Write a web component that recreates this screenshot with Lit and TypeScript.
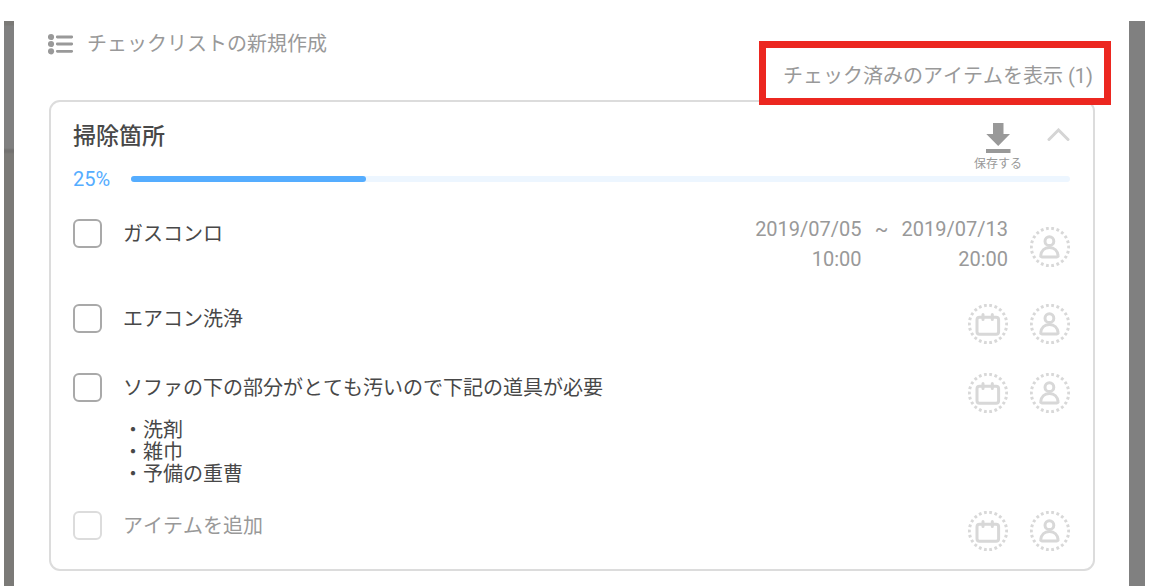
import { LitElement, html, css, svg, nothing } from "lit";
import { customElement, property, state } from "lit/decorators.js";

interface Stamp {
  date: string;
  time: string;
}

interface Item {
  id: string;
  title: string;
  notes?: string[];
  from?: Stamp;
  to?: Stamp;
}

const ITEMS: Item[] = [
  {
    id: "stove",
    title: "ガスコンロ",
    from: { date: "2019/07/05", time: "10:00" },
    to: { date: "2019/07/13", time: "20:00" },
  },
  { id: "aircon", title: "エアコン洗浄" },
  {
    id: "sofa",
    title: "ソファの下の部分がとても汚いので下記の道具が必要",
    notes: ["・洗剤", "・雑巾", "・予備の重曹"],
  },
];

const calendarGlyph = svg`
  <rect x="9" y="13.2" width="21.6" height="17" rx="2.5" />
  <path d="M15 10.6v5M24.3 10.6v5" stroke-linecap="round" />`;

const personGlyph = svg`
  <circle cx="19.4" cy="14.2" r="4.4" />
  <path d="M11.8 29.900h15.200c.700 0 1.200-.5 1.100-1.200-.4-4.900-3.800-8.300-8.700-8.300s-8.300 3.400-8.700 8.300c-.1.700.400 1.200 1.100 1.200z" stroke-linejoin="round" />`;

/** Round icon button with a dotted outline. */
@customElement("ring-button")
export class RingButton extends LitElement {
  @property() kind: "calendar" | "person" = "person";
  @property() label = "";

  static styles = css`
    :host {
      display: block;
      flex: none;
    }
    .ring {
      display: block;
      padding: 0;
      border: 0;
      background: none;
      cursor: pointer;
    }
    .icon {
      display: block;
      width: 40px;
      height: 40px;
      fill: none;
      stroke: #d8d8d8;
      stroke-width: 3;
    }
  `;

  render() {
    return html`<button class="ring" type="button" aria-label=${this.label}>
      <svg class="icon" viewBox="0 0 40 40" aria-hidden="true">
        <circle cx="20" cy="20" r="18.7" pathLength="110" stroke-dasharray="2.6 2.4" stroke-dashoffset="1.3" />
        ${this.kind === "calendar" ? calendarGlyph : personGlyph}
      </svg>
    </button>`;
  }
}

@customElement("check-item")
export class CheckItem extends LitElement {
  @property({ attribute: false }) item?: Item;

  static styles = css`
    :host {
      display: flex;
      align-items: flex-start;
    }
    * {
      box-sizing: border-box;
    }
    .box {
      appearance: none;
      flex: none;
      width: 29px;
      height: 29px;
      margin: 0 21px 0 0;
      border: 2px solid #a9a9a9;
      border-radius: 6px;
      background: #fff;
    }
    .box:checked {
      background: #55adff;
      border-color: #55adff;
    }
    .box:disabled {
      border-color: #dcdcdc;
    }
    .text {
      flex: 1;
      min-width: 0;
      color: #484848;
    }
    .title {
      display: block;
      line-height: 31px;
    }
    .notes {
      margin: 15px 0 -3px;
      line-height: 22px;
    }
    .field {
      display: block;
      flex: 1;
      min-width: 0;
      height: 29px;
      padding: 0;
      border: 0;
      outline: 0;
      background: none;
      font: inherit;
      color: #484848;
    }
    .field::placeholder {
      color: #999;
      opacity: 1;
    }
    .actions {
      display: flex;
      align-items: center;
      gap: 22px;
    }
    .schedule {
      display: flex;
      margin: -5px 0 1px;
      line-height: 30px;
      text-align: right;
      color: #999;
    }
    .stamp {
      display: block;
    }
    .tilde {
      width: 40px;
      text-align: center;
    }
  `;

  render() {
    const it = this.item;
    if (!it) {
      return html`
        <input class="box" type="checkbox" disabled aria-label="アイテムを追加" />
        <input class="field" type="text" placeholder="アイテムを追加" aria-label="アイテムを追加" />
        <div class="actions">
          <ring-button kind="calendar" label="日付"></ring-button>
          <ring-button kind="person" label="担当者"></ring-button>
        </div>`;
    }
    return html`
      <input class="box" type="checkbox" id=${it.id} />
      <div class="text">
        <label class="title" for=${it.id}>${it.title}</label>
        ${it.notes
          ? html`<div class="notes">${it.notes.map((n) => html`<div>${n}</div>`)}</div>`
          : nothing}
      </div>
      <div class="actions">
        ${it.from && it.to
          ? html`<div class="schedule">
              <div><span class="stamp">${it.from.date}</span><span class="stamp">${it.from.time}</span></div>
              <span class="tilde">~</span>
              <div><span class="stamp">${it.to.date}</span><span class="stamp">${it.to.time}</span></div>
            </div>`
          : html`<ring-button kind="calendar" label="日付"></ring-button>`}
        <ring-button kind="person" label="担当者"></ring-button>
      </div>`;
  }
}

@customElement("app-root")
export class AppRoot extends LitElement {
  @state() private percent = 25;

  static styles = css`
    :host {
      display: grid;
      grid-template-columns: 10px minmax(0, 1fr) 16px;
      box-sizing: border-box;
      min-height: 100vh;
      padding: 21px 9px 0 4px;
      background: #fff;
      font-family: Roboto, "Noto Sans CJK JP", sans-serif;
      font-size: 20px;
      font-kerning: none;
    }
    * {
      box-sizing: border-box;
    }
    .edge-left {
      background: linear-gradient(#7b7a77 0 4px, #808080 5px 127px, #727170 129px 131px, #7b7a77 133px);
    }
    .edge-right {
      background: #808080;
    }
    .panel {
      padding: 8px 34px 15px 34px;
    }
    button {
      padding: 0;
      border: 0;
      background: none;
      font: inherit;
      font-kerning: none;
      color: #999;
      cursor: pointer;
    }
    .create {
      display: flex;
      align-items: center;
      gap: 13px;
      height: 30px;
      line-height: 28px;
    }
    .list-icon {
      width: 26px;
      height: 22px;
      fill: #999;
      stroke: #999;
    }
    .filter {
      display: flex;
      justify-content: flex-end;
      margin: 1px 2px 10px 0;
    }
    .show-done {
      position: relative;
      height: 30px;
      line-height: 32px;
    }
    .marker {
      position: absolute;
      inset: -19px -18px -15px -24px;
      border: 7px solid #ec2720;
      pointer-events: none;
    }
    .card {
      margin-left: 1px;
      padding: 14px 23px 18px 22px;
      border: 2px solid #dcdcdc;
      border-radius: 11px;
    }
    .head {
      display: flex;
      align-items: flex-start;
    }
    .name {
      flex: 1;
      margin: 0;
      font-size: 23px;
      line-height: 42px;
      font-weight: 500;
      color: #484848;
    }
    .save {
      display: flex;
      flex-direction: column;
      align-items: center;
      gap: 4px;
      padding-top: 7px;
      margin-right: 25px;
      font-size: 12px;
      line-height: 14px;
    }
    .save-icon {
      width: 26px;
      height: 30px;
      fill: #999;
    }
    .fold {
      padding-top: 12px;
    }
    .fold-icon {
      display: block;
      width: 23px;
      height: 14px;
      fill: none;
      stroke: #d5d5d5;
      stroke-width: 3;
      stroke-linecap: round;
    }
    .progress {
      display: flex;
      align-items: center;
      height: 16px;
      margin-bottom: 32px;
      color: #55adff;
    }
    .percent {
      width: 58px;
    }
    .track {
      flex: 1;
      height: 6px;
      border-radius: 3px;
      background: #edf6ff;
    }
    .fill {
      height: 6px;
      border-radius: 3px;
      background: #55adff;
    }
    .items {
      display: grid;
      gap: 29px;
    }
  `;

  render() {
    return html`
      <div class="edge-left"></div>
      <main class="panel">
        <button class="create" type="button">
          <svg class="list-icon" viewBox="0 0 26 22" aria-hidden="true">
            <g stroke="none">
              <circle cx="3" cy="4" r="3.100" />
              <circle cx="3" cy="11" r="3.100" />
              <circle cx="3" cy="18.3" r="3.100" />
            </g>
            <path d="M9.3 4h14.4M9.3 11h14.4M9.3 18.3h14.4" stroke-width="2.8" stroke-linecap="round" />
          </svg>
          <span>チェックリストの新規作成</span>
        </button>
        <div class="filter">
          <button class="show-done" type="button">
            チェック済みのアイテムを表示 (1)<span class="marker"></span>
          </button>
        </div>
        <section class="card">
          <header class="head">
            <h2 class="name">掃除箇所</h2>
            <button class="save" type="button">
              <svg class="save-icon" viewBox="0 0 26 30" aria-hidden="true">
                <path d="M8 0h10.5v11H25L13.2 23 1.300 11H8zM1 26h24.500v4H1z" />
              </svg>
              <span>保存する</span>
            </button>
            <button class="fold" type="button" aria-label="折りたたむ">
              <svg class="fold-icon" viewBox="0 0 23 14" aria-hidden="true">
                <path d="M2 11.500L11.500 2 21 11.500" />
              </svg>
            </button>
          </header>
          <div class="progress">
            <span class="percent">${this.percent}%</span>
            <div class="track" role="progressbar" aria-valuenow=${this.percent} aria-label="進捗">
              <div class="fill" style="width:${this.percent}%"></div>
            </div>
          </div>
          <div class="items">
            ${ITEMS.map((it) => html`<check-item .item=${it}></check-item>`)}
            <check-item></check-item>
          </div>
        </section>
      </main>
      <div class="edge-right"></div>
    `;
  }
}
